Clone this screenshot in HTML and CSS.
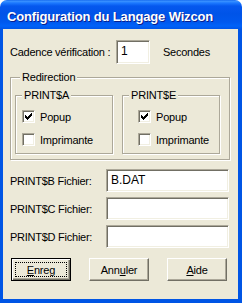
FILE: index.html
```html
<!DOCTYPE html>
<html lang="fr">
<head>
<meta charset="utf-8">
<title>Configuration du Langage Wizcon</title>
<link rel="stylesheet" href="styles.css">
</head>
<body>
<div class="win">
  <div class="titlebar"><span class="title">Configuration du Langage Wizcon</span></div>
  <div class="frame">
    <div class="client">
      <div class="row row-cadence">
        <label class="lbl lbl-cadence">Cadence vérification :</label>
        <div class="edit edit-small">1</div>
        <span class="lbl lbl-sec">Secondes</span>
      </div>

      <div class="group group-outer">
        <span class="caption caption-outer">Redirection</span>
        <div class="subgroups">
          <div class="group group-a">
            <span class="caption">PRINT$A</span>
            <div class="check"><span class="box"><svg width="13" height="13" viewBox="0 0 13 13"><path d="M3 5h1v3h-1zM4 6h1v3h-1zM5 7h1v3h-1zM6 6h1v3h-1zM7 5h1v3h-1zM8 4h1v3h-1zM9 3h1v3h-1z" fill="#000"/></svg></span><span>Popup</span></div>
            <div class="check"><span class="box"></span><span>Imprimante</span></div>
          </div>
          <div class="group group-e">
            <span class="caption">PRINT$E</span>
            <div class="check"><span class="box"><svg width="13" height="13" viewBox="0 0 13 13"><path d="M3 5h1v3h-1zM4 6h1v3h-1zM5 7h1v3h-1zM6 6h1v3h-1zM7 5h1v3h-1zM8 4h1v3h-1zM9 3h1v3h-1z" fill="#000"/></svg></span><span>Popup</span></div>
            <div class="check"><span class="box"></span><span>Imprimante</span></div>
          </div>
        </div>
      </div>

      <div class="files">
        <div class="row row-file"><label class="lbl lbl-file">PRINT$B Fichier:</label><div class="edit edit-wide">B.DAT</div></div>
        <div class="row row-file"><label class="lbl lbl-file">PRINT$C Fichier:</label><div class="edit edit-wide"></div></div>
        <div class="row row-file"><label class="lbl lbl-file">PRINT$D Fichier:</label><div class="edit edit-wide"></div></div>
      </div>

      <div class="buttons">
        <button class="btn btn-default"><span class="focus"><u>E</u>nreg</span></button>
        <button class="btn">Ann<u>u</u>ler</button>
        <button class="btn"><u>A</u>ide</button>
      </div>
    </div>
  </div>
</div>
</body>
</html>
```
FILE: styles.css
```css
html, body {
  margin: 0;
  padding: 0;
  background: #ffffff;
}

.win {
  width: 242px;
  height: 303px;
  display: flex;
  flex-direction: column;
  font-family: "Liberation Sans", Arial, sans-serif;
  font-size: 11px;
  color: #000;
}

.titlebar {
  height: 29px;
  flex: none;
  box-sizing: border-box;
  border-radius: 7px 7px 0 0;
  background: linear-gradient(to bottom, #0A5EEB 0px, #3D95FF 1px, #1C79FF 3px, #0558EE 6px, #0054E8 14px, #0058EE 22px, #0062F8 26px, #0055E8 29px);
  padding: 3px 0 0 7px;
  display: flex;
  align-items: center;
}

.title {
  color: #ffffff;
  font-weight: bold;
  font-size: 13px;
  letter-spacing: -0.15px;
  text-shadow: 1px 1px 0 #0A1E8C;
  white-space: nowrap;
}

.frame {
  flex: 1;
  display: flex;
  background: #0055E5;
  padding: 0 4px 4px 3px;
}

.client {
  flex: 1;
  background: #ECE9D8;
  padding: 11px 0 0 7px;
  display: flex;
  flex-direction: column;
}

.row {
  display: flex;
  align-items: center;
}

.lbl {
  letter-spacing: -0.25px;
  white-space: nowrap;
}

.lbl-cadence {
  width: 106px;
}

.lbl-sec {
  margin-left: 13px;
}

.edit {
  box-sizing: border-box;
  height: 24px;
  background: #ffffff;
  border-top: 1px solid #ACA899;
  border-left: 1px solid #ACA899;
  border-right: 1px solid #ffffff;
  border-bottom: 1px solid #ffffff;
  box-shadow: inset 1px 1px 0 #716F64, inset -1px -1px 0 #F1EFE2;
  padding: 3px 0 0 4px;
  font-size: 12px;
  line-height: 14px;
}

.edit-small {
  width: 34px;
}

.group {
  position: relative;
  box-sizing: border-box;
  border: 1px solid #ACA899;
  box-shadow: 1px 1px 0 #ffffff, inset 1px 1px 0 #ffffff;
}

.caption {
  position: absolute;
  top: -7px;
  left: 6px;
  padding: 0 2px;
  line-height: 13px;
  background: #ECE9D8;
  letter-spacing: -0.2px;
  white-space: nowrap;
}

.caption-outer {
  left: 9px;
}

.group-outer {
  margin-top: 13px;
  width: 220px;
  padding: 17px 0 5px 4px;
}

.subgroups {
  display: flex;
  gap: 9px;
}

.group-a, .group-e {
  width: 98px;
  height: 59px;
  padding: 14px 0 0 6px;
  display: flex;
  flex-direction: column;
  gap: 10px;
}

.group-e {
  padding-left: 15px;
}

.check {
  display: flex;
  align-items: center;
  gap: 5px;
  height: 13px;
  letter-spacing: -0.2px;
}

.box {
  width: 13px;
  height: 13px;
  box-sizing: border-box;
  flex: none;
  background: #ffffff;
  border-top: 1px solid #ACA899;
  border-left: 1px solid #ACA899;
  border-right: 1px solid #ffffff;
  border-bottom: 1px solid #ffffff;
  box-shadow: inset 1px 1px 0 #716F64, inset -1px -1px 0 #F1EFE2;
  position: relative;
}

.box svg {
  position: absolute;
  left: -1px;
  top: -1px;
}

.files {
  margin-top: 9px;
  display: flex;
  flex-direction: column;
  gap: 5px;
}

.row-file {
  height: 23px;
}

.lbl-file {
  width: 96px;
}

.edit-wide {
  width: 123px;
  height: 23px;
}

.buttons {
  margin-top: 10px;
  margin-left: 1px;
  display: flex;
  gap: 18px;
}

.btn {
  width: 60px;
  height: 23px;
  box-sizing: border-box;
  margin: 0;
  padding: 0;
  background: #ECE9D8;
  font-family: "Liberation Sans", Arial, sans-serif;
  font-size: 11px;
  letter-spacing: -0.2px;
  color: #000;
  border-top: 1px solid #ffffff;
  border-left: 1px solid #ffffff;
  border-right: 1px solid #716F64;
  border-bottom: 1px solid #716F64;
  box-shadow: inset -1px -1px 0 #ACA899;
  border-radius: 0;
}

.btn-default {
  border: 1px solid #000000;
  box-shadow: inset 1px 1px 0 #ffffff, inset -1px -1px 0 #716F64, inset -2px -2px 0 #ACA899;
  padding: 3px;
}

.focus {
  display: flex;
  width: 100%;
  height: 100%;
  box-sizing: border-box;
  border: 1px dotted #000;
  align-items: center;
  justify-content: center;
}
```
